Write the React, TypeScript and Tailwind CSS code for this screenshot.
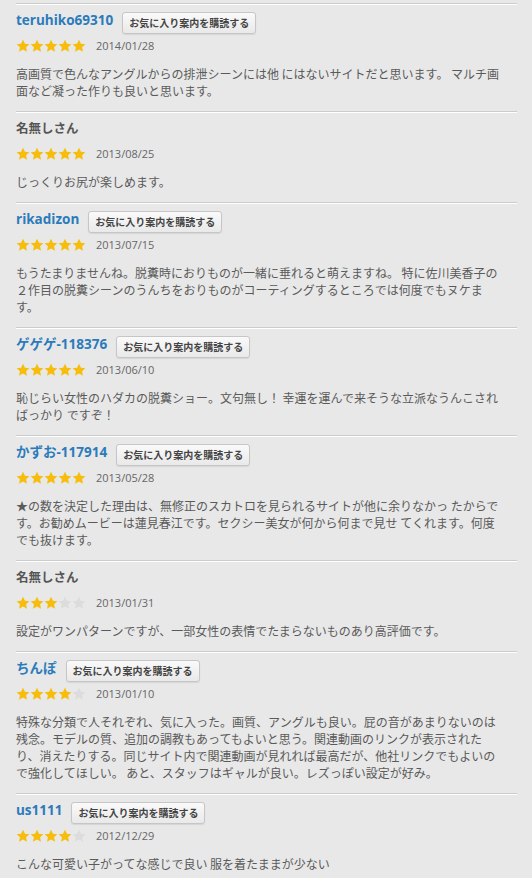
const reviews = [
  {
    name: "teruhiko69310",
    member: true,
    stars: 5,
    date: "2014/01/28",
    lines: [
      "高画質で色んなアングルからの排泄シーンには他 にはないサイトだと思います。 マルチ画",
      "面など凝った作りも良いと思います。",
    ],
  },
  {
    name: "名無しさん",
    member: false,
    stars: 5,
    date: "2013/08/25",
    lines: ["じっくりお尻が楽しめます。"],
  },
  {
    name: "rikadizon",
    member: true,
    stars: 5,
    date: "2013/07/15",
    lines: [
      "もうたまりませんね。脱糞時におりものが一緒に垂れると萌えますね。 特に佐川美香子の",
      "２作目の脱糞シーンのうんちをおりものがコーティングするところでは何度でもヌケま",
      "す。",
    ],
  },
  {
    name: "ゲゲゲ-118376",
    member: true,
    stars: 5,
    date: "2013/06/10",
    lines: [
      "恥じらい女性のハダカの脱糞ショー。文句無し！ 幸運を運んで来そうな立派なうんこされ",
      "ばっかり ですぞ！",
    ],
  },
  {
    name: "かずお-117914",
    member: true,
    stars: 5,
    date: "2013/05/28",
    lines: [
      "★の数を決定した理由は、無修正のスカトロを見られるサイトが他に余りなかっ たからで",
      "す。お勧めムービーは蓮見春江です。セクシー美女が何から何まで見せ てくれます。何度",
      "でも抜けます。",
    ],
  },
  {
    name: "名無しさん",
    member: false,
    stars: 3,
    date: "2013/01/31",
    lines: ["設定がワンパターンですが、一部女性の表情でたまらないものあり高評価です。"],
  },
  {
    name: "ちんぽ",
    member: true,
    stars: 4,
    date: "2013/01/10",
    lines: [
      "特殊な分類で人それぞれ、気に入った。画質、アングルも良い。屁の音があまりないのは",
      "残念。モデルの質、追加の調教もあってもよいと思う。関連動画のリンクが表示された",
      "り、消えたりする。同じサイト内で関連動画が見れれば最高だが、他社リンクでもよいの",
      "で強化してほしい。 あと、スタッフはギャルが良い。レズっぽい設定が好み。",
    ],
  },
  {
    name: "us1111",
    member: true,
    stars: 4,
    date: "2012/12/29",
    lines: ["こんな可愛い子がってな感じで良い 服を着たままが少ない"],
  },
];

function Star({ on }: { on: boolean }) {
  return (
    <svg width="14" height="14" viewBox="0 0 24 24">
      <path
        d="M12 1.2l3.3 7 7.6.9-5.6 5.2 1.5 7.6L12 18.1l-6.8 3.8 1.5-7.6L1.1 9.1l7.6-.9z"
        fill={on ? "#f7bd0c" : "#dcdcdc"}
      />
    </svg>
  );
}

function Review({ r }: { r: (typeof reviews)[number] }) {
  return (
    <div className="border-t border-[#cbcbcb] shadow-[inset_0_1px_0_#ffffff] pt-[6px] pb-[12px]">
      <div className="flex items-start h-[20px]">
        {r.member ? (
          <span className="text-[13.5px] leading-[20px] font-bold text-[#2b7bbb] [font-family:'Open_Sans','Noto_Sans_CJK_JP',sans-serif]">
            {r.name}
          </span>
        ) : (
          <span className="text-[12.5px] leading-[20px] font-bold text-[#555] [font-family:'Noto_Sans_CJK_JP',sans-serif]">
            {r.name}
          </span>
        )}
        {r.member && (
          <button className="ml-[9px] mt-[2px] h-[22px] px-[6px] rounded-[3px] border border-[#c6c6c6] bg-gradient-to-b from-[#fafafa] to-[#e9e9e9] shadow-[0_1px_1px_rgba(0,0,0,0.08)] text-[10px] leading-[20px] font-bold text-[#444] [font-family:'Noto_Sans_CJK_JP',sans-serif]">
            お気に入り案内を購読する
          </button>
        )}
      </div>
      <div className="flex items-center h-[14px] mt-[9px]">
        <div className="flex">
          {[0, 1, 2, 3, 4].map((i) => (
            <Star key={i} on={i < r.stars} />
          ))}
        </div>
        <span className="ml-[10px] text-[11px] leading-[14px] text-[#666] [font-family:'Open_Sans',sans-serif]">
          {r.date}
        </span>
      </div>
      <div className="mt-[12px] text-[12px] leading-[17px] text-[#5a5a5a] [font-family:'Noto_Sans_CJK_JP',sans-serif]">
        {r.lines.map((l, i) => (
          <div key={i} className="whitespace-nowrap">
            {l}
          </div>
        ))}
      </div>
    </div>
  );
}

export default function App() {
  return (
    <div className="w-[532px] h-[878px] overflow-hidden bg-[#e8e8e8] pt-[3px] pl-4">
      <div className="w-[501px]">
        {reviews.map((r, i) => (
          <Review key={i} r={r} />
        ))}
      </div>
    </div>
  );
}
